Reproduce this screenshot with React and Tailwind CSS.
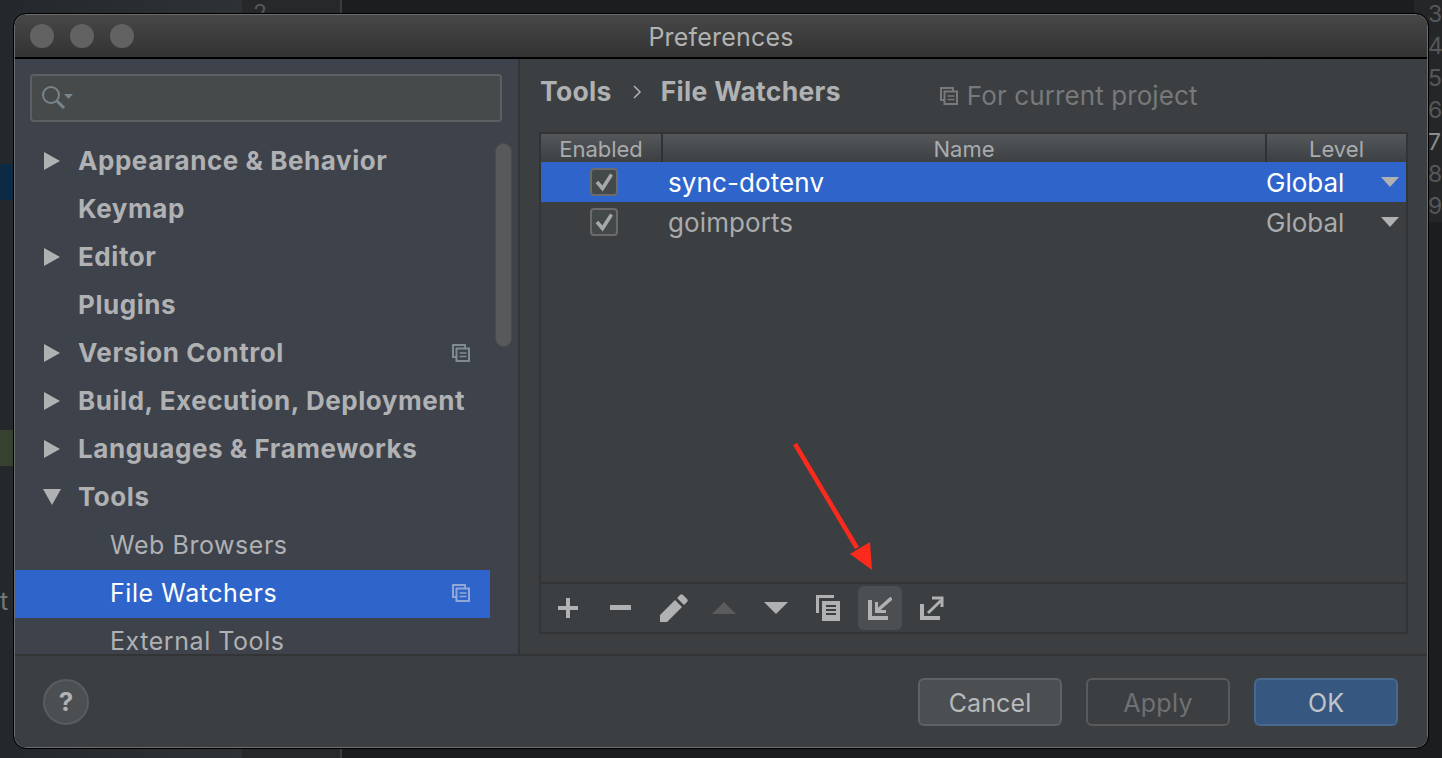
import React from 'react';

const font = { fontFamily: 'Inter, "Liberation Sans", sans-serif' };

const treeItems = [
	{ label: 'Appearance & Behavior', arrow: 'right', bold: true },
	{ label: 'Keymap', bold: true },
	{ label: 'Editor', arrow: 'right', bold: true },
	{ label: 'Plugins', bold: true },
	{ label: 'Version Control', arrow: 'right', bold: true, project: true },
	{ label: 'Build, Execution, Deployment', arrow: 'right', bold: true },
	{ label: 'Languages & Frameworks', arrow: 'right', bold: true },
	{ label: 'Tools', arrow: 'down', bold: true },
	{ label: 'Web Browsers', child: true },
	{ label: 'File Watchers', child: true, selected: true, project: true },
	{ label: 'External Tools', child: true }
];

function ProjectIcon({ color = '#7f8b91', className = '' }) {
	return (
		<svg width="18" height="18" viewBox="0 0 18 18" fill="none" stroke={color} strokeWidth="2" className={className}>
			<path d="M4 13H1V1h12v3" />
			<rect x="4.5" y="4.5" width="12.5" height="12.5" />
			<path d="M7.5 9h7M7.5 12.5h7" strokeWidth="1.6" />
		</svg>
	);
}

function Checkbox() {
	return (
		<span className="flex h-[28px] w-[28px] items-center justify-center rounded-[4px] border-2 border-[#6b6b6b] bg-[#43494a]">
			<svg width="20" height="20" viewBox="0 0 20 20" fill="none" stroke="#a6a8aa" strokeWidth="3.5">
				<path d="M3 10l5.500 6.500L17.500 2.500" />
			</svg>
		</span>
	);
}

function TableRow({ name, selected }) {
	return (
		<div className={`flex h-[40px] items-center ${selected ? 'bg-[#2f65ca] text-white' : 'text-[#a9abad]'}`}>
			<div className="flex w-[127px] justify-center pr-[1px]">
				<Checkbox />
			</div>
			<div className="flex-1 pt-[2px] text-[26px] leading-none tracking-[0.1px]">{name}</div>
			<div className="w-[115px] pt-[2px] text-[26px] leading-none">Global</div>
			<svg width="18" height="10" viewBox="0 0 18 10" className="mr-[7px]">
				<path d="M0 0h18L9 10z" fill="#b0b1b3" />
			</svg>
		</div>
	);
}

function HeaderCell({ children, className = '' }) {
	return <div className={`flex h-full items-center justify-center pt-[1px] text-[#a9abad] text-[22px] leading-none ${className}`}>{children}</div>;
}

function Toolbar() {
	const c = '#afb1b3';
	return (
		<div className="flex h-[50px] shrink-0 items-center border-t-2 border-[#323436] pl-[11px]">
			<button className="flex h-[44px] w-[32px] items-center justify-center">
				<svg width="22" height="22" viewBox="0 0 22 22"><path d="M9 1h4v8h8v4h-8v8H9v-8H1V9h8z" fill={c} /></svg>
			</button>
			<button className="ml-[21px] flex h-[44px] w-[32px] items-center justify-center">
				<svg width="22" height="6" viewBox="0 0 22 6"><rect width="21" height="5" fill={c} /></svg>
			</button>
			<button className="ml-[21px] flex h-[44px] w-[32px] items-center justify-center">
				<svg width="28" height="28" viewBox="0 0 28 28"><path d="M0 21L15 6l7 7L7 28H0zM17 4l3-3q2-1.500 3 0l4 4q1.500 1.500 0 3l-3 3z" fill={c} /></svg>
			</button>
			<button className="ml-[18px] flex h-[44px] w-[32px] items-center justify-center">
				<svg width="24" height="12" viewBox="0 0 24 12"><path d="M12 0l12 12H0z" fill="#5b5c5e" /></svg>
			</button>
			<button className="ml-[20px] flex h-[44px] w-[32px] items-center justify-center">
				<svg width="24" height="12" viewBox="0 0 24 12"><path d="M0 0h24L12 12z" fill={c} /></svg>
			</button>
			<button className="ml-[20px] flex h-[44px] w-[32px] items-center justify-center">
				<svg width="24" height="26" viewBox="0 0 24 26">
					<path d="M0 0h18v3H3v15H0z" fill={c} />
					<path d="M6 6h18v20H6z" fill={c} />
					<path d="M10 11h10M10 15h10M10 19h10" stroke="#3c3f41" strokeWidth="2" />
				</svg>
			</button>
			<button className="ml-[14px] flex h-[44px] w-[44px] items-center justify-center rounded-[6px] bg-[#4b4f52]">
				<svg width="24" height="24" viewBox="0 0 24 24" fill="none" stroke={c}>
					<path d="M2 4v18h18" strokeWidth="4" />
					<path d="M23.500 2L10 14" strokeWidth="3.5" />
					<path d="M8.500 6v9.500H18" strokeWidth="3" />
				</svg>
			</button>
			<button className="ml-[8px] flex h-[44px] w-[44px] items-center justify-center">
				<svg width="24" height="24" viewBox="0 0 24 24" fill="none" stroke={c}>
					<path d="M2 8v14h18" strokeWidth="4" />
					<path d="M8 17L21 4.500" strokeWidth="3" />
					<path d="M12 2h10v9" strokeWidth="3" />
				</svg>
			</button>
		</div>
	);
}

export default function App() {
	return (
		<div className="relative h-[758px] w-[1442px] overflow-hidden bg-[#1c1d1e]" style={font}>
			{/* IDE showing behind the dialog */}
			<div className="absolute inset-y-0 left-0 w-[242px] bg-gradient-to-r from-[#23282c] to-[#2f3235]" />
			<div className="absolute inset-y-0 left-[242px] w-[100px] border-r-2 border-[#3a3c3e] bg-[#26282a]" />
			<div className="absolute left-0 top-[164px] h-[36px] w-[14px] bg-[#0c2a44]" />
			<div className="absolute left-0 top-[430px] h-[36px] w-[14px] bg-[#37412f]" />
			<div className="absolute left-0 top-[589px] text-[25px] leading-none text-[#777]">t</div>
			<div className="absolute left-[253px] top-[2px] text-[23px] leading-none text-[#55585a]">2</div>
			<div className="absolute right-0 top-[-2px] flex h-[224px] w-[28px] flex-col bg-[#242628] pl-[14px] text-[23px] leading-[32px] text-[#55585a]">
				{['3', '4', '5', '6', '7', '8', '9'].map(n => (
					<span key={n} className={n === '7' ? 'text-[#8a8c8e]' : ''}>{n}</span>
				))}
			</div>

			{/* Dialog */}
			<div className="relative ml-[14px] mt-[14px] flex h-[734px] w-[1414px] flex-col overflow-hidden rounded-[12px] border border-[#6a6c6e] outline outline-1 outline-black">
				<div className="relative flex h-[44px] shrink-0 items-center justify-center border-b-2 border-black bg-gradient-to-b from-[#474747] to-[#333333] pt-[3px]">
					<div className="absolute left-[15px] top-[9px] flex gap-[16px]">
						<span className="h-[24px] w-[24px] rounded-full bg-[#626262]" />
						<span className="h-[24px] w-[24px] rounded-full bg-[#626262]" />
						<span className="h-[24px] w-[24px] rounded-full bg-[#626262]" />
					</div>
					<span className="text-[25px] leading-none tracking-[0.2px] text-[#b2b2b2]">Preferences</span>
				</div>

				<div className="flex h-[597px] shrink-0 border-b-2 border-[#323436]">
					{/* Tree panel */}
					<div className="flex w-[505px] flex-col overflow-hidden border-r-2 border-[#323436] bg-[#3e424b]">
						<div className="mx-[15px] mt-[15px] flex h-[48px] w-[472px] shrink-0 items-center rounded-[4px] border-2 border-[#5d6063] bg-[#464a4b] pl-[8px]">
							<svg width="34" height="26" viewBox="0 0 34 26" fill="none" stroke="#78848c" strokeWidth="2">
								<circle cx="11" cy="10" r="8" />
								<path d="M17 16l7 7" strokeWidth="3" />
								<path d="M24 9h9l-4.500 5z" fill="#78848c" stroke="none" />
							</svg>
						</div>
						<div className="relative mt-[16px] flex-1 overflow-hidden">
							{treeItems.map(item => (
								<div
									key={item.label}
									className={`flex h-[48px] w-[475px] shrink-0 items-center pb-[2px] ${item.selected ? 'bg-[#2f65ca] text-white' : 'text-[#b0b1b3]'}`}
								>
									<span className="flex w-[63px] justify-center pl-[10px]">
										{item.arrow === 'right' && (
											<svg width="16" height="18" viewBox="0 0 16 18"><path d="M0 0l16 9-16 9z" fill="#b0b1b3" /></svg>
										)}
										{item.arrow === 'down' && (
											<svg width="18" height="16" viewBox="0 0 18 16"><path d="M0 0h18L9 16z" fill="#b0b1b3" /></svg>
										)}
									</span>
									<span className={`flex-1 leading-none tracking-[0.55px] ${item.bold ? 'text-[26px] font-bold' : 'text-[25px]'} ${item.child ? 'pl-[32px]' : ''}`}>
										{item.label}
									</span>
									{item.project && <ProjectIcon color={item.selected ? '#8fa8d8' : '#7f8b91'} className="mr-[20px]" />}
								</div>
							))}
							<div className="absolute left-[480px] top-[5px] h-[204px] w-[17px] rounded-full border border-[#4a4c50] bg-[#57595b]" />
						</div>
					</div>

					{/* Settings panel */}
					<div className="flex flex-1 flex-col bg-[#3c3f41] pl-[19px] pr-[19px]">
						<div className="flex h-[73px] shrink-0 items-center pb-[8px] text-[#b0b1b3]">
							<span className="pl-[1px] text-[26.5px] font-bold leading-none tracking-[0.3px]">Tools</span>
							<svg width="10" height="14" viewBox="0 0 10 14" fill="none" stroke="#b0b1b3" strokeWidth="1.500" className="ml-[20px]">
								<path d="M2 1l6 6-6 6" />
							</svg>
							<span className="ml-[19px] text-[26.5px] font-bold leading-none tracking-[0.3px]">File Watchers</span>
							<span className="ml-[99px] mt-[8px] flex items-center text-[26px] leading-none tracking-[0.1px] text-[#77797b]">
								<ProjectIcon color="#78797b" className="mr-[9px]" />
								For current project
							</span>
						</div>

						<div className="flex h-[502px] flex-col border-2 border-[#323436]">
							<div className="flex h-[28px] shrink-0 items-center bg-gradient-to-b from-[#54585b] to-[#3d4042]">
								<HeaderCell className="w-[122px] border-r-2 border-[#303234]">Enabled</HeaderCell>
								<HeaderCell className="flex-1 border-r-2 border-[#303234]">Name</HeaderCell>
								<HeaderCell className="w-[139px]">Level</HeaderCell>
							</div>
							<TableRow name="sync-dotenv" selected />
							<TableRow name="goimports" />
							<div className="flex-1" />
							<Toolbar />
						</div>
					</div>
				</div>

				{/* Footer */}
				<div className="flex flex-1 items-center bg-[#3c3f41] pl-[28px] pr-[29px]">
					<span className="flex h-[46px] w-[46px] items-center justify-center rounded-full border-2 border-[#5a5d5f] bg-[#4b4f52] text-[26px] font-bold leading-none text-[#b0b1b3]">?</span>
					<div className="ml-auto flex gap-[24px]">
						<button className="h-[48px] w-[144px] rounded-[6px] border-2 border-[#5f6264] bg-[#4b4f52] pt-[4px] text-[25px] tracking-[0.1px] text-[#b8b9bb]">Cancel</button>
						<button className="h-[48px] w-[144px] rounded-[6px] border-2 border-[#585a5c] bg-[#3c3f41] pt-[4px] text-[25px] tracking-[0.3px] text-[#6f7173]">Apply</button>
						<button className="h-[48px] w-[144px] rounded-[6px] border-2 border-[#47688f] bg-[#365880] pt-[4px] text-[25px] text-[#c0c4c9]">OK</button>
					</div>
				</div>
			</div>

			{/* Red annotation arrow */}
			<svg className="absolute left-[786px] top-[436px]" width="92" height="140" viewBox="0 0 92 140">
				<path d="M9 8l62 104" stroke="#fb2a1c" strokeWidth="4.500" fill="none" />
				<path d="M64 118l22 16-2-28z" fill="#fb2a1c" />
			</svg>
		</div>
	);
}
